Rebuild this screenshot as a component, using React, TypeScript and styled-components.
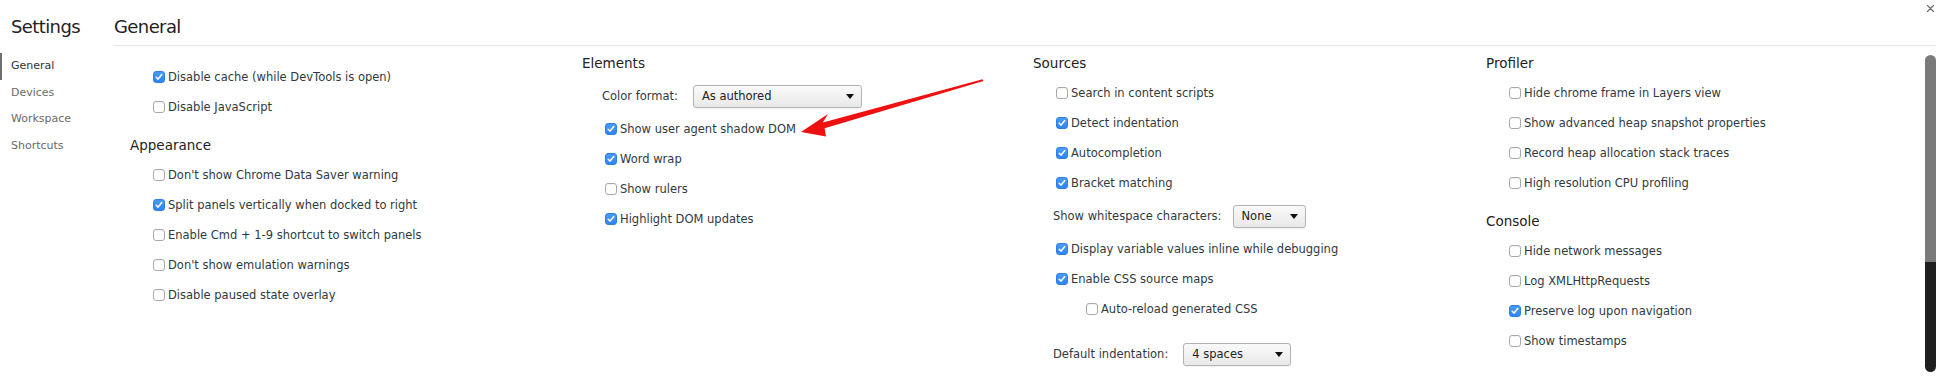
import React from 'react';
import styled, { createGlobalStyle } from 'styled-components';

const Global = createGlobalStyle`
  html, body { margin: 0; padding: 0; background: #ffffff; }
  body { font-family: "DejaVu Sans", "Liberation Sans", sans-serif; color: #303942; }
`;

const Page = styled.div`
  position: relative;
  display: flex;
  width: 1944px;
  height: 381px;
  overflow: hidden;
  background: #ffffff;
`;

const Sidebar = styled.nav`
  flex: none;
  width: 114px;
  display: flex;
  flex-direction: column;
  padding-top: 16px;
  box-sizing: border-box;
`;

const AppTitle = styled.h1`
  margin: 0 0 15px 11px;
  font-size: 18px;
  line-height: 22px;
  font-weight: normal;
  letter-spacing: -0.6px;
  color: #222222;
`;

const Tab = styled.div<{ $active?: boolean }>`
  height: 26.5px;
  line-height: 26.5px;
  font-size: 11px;
  padding-left: ${(p) => (p.$active ? '9px' : '11px')};
  border-left: ${(p) => (p.$active ? '2px solid #6e6e6e' : 'none')};
  color: ${(p) => (p.$active ? '#333333' : '#6a6a6a')};
`;

const Main = styled.main`
  flex: 1;
  display: flex;
  flex-direction: column;
  margin-right: 8px;
  min-width: 0;
`;

const Header = styled.header`
  flex: none;
  height: 46px;
  box-sizing: border-box;
  padding-top: 16px;
  border-bottom: 1px solid #e4e4e4;
`;

const PageTitle = styled.h2`
  margin: 0;
  font-size: 18px;
  line-height: 22px;
  font-weight: normal;
  letter-spacing: -0.6px;
  color: #222222;
`;

const Content = styled.div`
  flex: 1;
  display: flex;
  min-height: 0;
`;

const Columns = styled.div`
  flex: 1;
  display: grid;
  grid-template-columns: 452px 451px 453px 1fr;
  padding-left: 16px;
  align-items: start;
`;

const Column = styled.div<{ $top: number }>`
  display: flex;
  flex-direction: column;
  padding-top: ${(p) => p.$top}px;
`;

const Section = styled.section`
  display: flex;
  flex-direction: column;
  & + & { margin-top: 8px; }
`;

const SectionTitle = styled.h3`
  margin: 0;
  height: 30px;
  line-height: 30px;
  font-size: 13.5px;
  font-weight: normal;
  color: #222222;
`;

const CheckRow = styled.label<{ $nested?: boolean }>`
  display: flex;
  align-items: center;
  height: 30px;
  padding-left: ${(p) => (p.$nested ? 53 : 23)}px;
  gap: 3px;
  font-size: 11.5px;
  white-space: nowrap;
`;

const Box = styled.span<{ $checked: boolean }>`
  flex: none;
  width: 12px;
  height: 12px;
  box-sizing: border-box;
  border-radius: 3px;
  display: flex;
  align-items: center;
  justify-content: center;
  background: ${(p) => (p.$checked ? 'linear-gradient(#4a9bf8, #2f84ef)' : '#ffffff')};
  border: 1px solid ${(p) => (p.$checked ? '#2d7fe6' : '#a9a9a9')};
  box-shadow: ${(p) => (p.$checked ? 'none' : 'inset 0 1px 1px rgba(0,0,0,0.06)')};
`;

const SelectRow = styled.div<{ $spaced?: boolean; $gap: number }>`
  display: flex;
  align-items: center;
  height: 36px;
  padding-left: 20px;
  gap: ${(p) => p.$gap}px;
  font-size: 11.5px;
  margin-top: ${(p) => (p.$spaced ? 12 : 0)}px;
  white-space: nowrap;
`;

const SelectBox = styled.div<{ $width: number }>`
  flex: none;
  width: ${(p) => p.$width}px;
  height: 23px;
  box-sizing: border-box;
  display: flex;
  align-items: center;
  justify-content: space-between;
  padding: 0 7px 0 8px;
  border: 1px solid #b3b3b3;
  border-radius: 3px;
  background: linear-gradient(#f9f9f9, #e9e9e9);
  box-shadow: 0 1px 0 rgba(0,0,0,0.05);
  font-size: 11.5px;
  color: #222222;
`;

const Scrollbar = styled.div`
  flex: none;
  width: 11px;
  height: 317px;
  margin-top: 9px;
  border-radius: 6px;
  background: linear-gradient(#7a7a7a 0, #7a7a7a 207px, #1f1f1f 207px, #1f1f1f 100%);
`;

const CloseButton = styled.button`
  position: absolute;
  top: 4px;
  right: 9px;
  width: 9px;
  height: 9px;
  padding: 0;
  border: none;
  background: transparent;
  display: flex;
  align-items: center;
  justify-content: center;
`;

const ArrowLayer = styled.svg`
  position: absolute;
  left: 0;
  top: 0;
  pointer-events: none;
`;

type Item =
  | { kind: 'check'; label: string; checked?: boolean; nested?: boolean }
  | { kind: 'select'; label: string; value: string; width: number; gap: number; spaced?: boolean };

type Sec = { title?: string; items: Item[] };

const c = (label: string, checked = false, nested = false): Item => ({ kind: 'check', label, checked, nested });

const columns: { top: number; sections: Sec[] }[] = [
  {
    top: 16,
    sections: [
      { items: [c('Disable cache (while DevTools is open)', true), c('Disable JavaScript')] },
      {
        title: 'Appearance',
        items: [
          c("Don't show Chrome Data Saver warning"),
          c('Split panels vertically when docked to right', true),
          c('Enable Cmd + 1-9 shortcut to switch panels'),
          c("Don't show emulation warnings"),
          c('Disable paused state overlay'),
        ],
      },
    ],
  },
  {
    top: 2,
    sections: [
      {
        title: 'Elements',
        items: [
          { kind: 'select', label: 'Color format:', value: 'As authored', width: 169, gap: 15 },
          c('Show user agent shadow DOM', true),
          c('Word wrap', true),
          c('Show rulers'),
          c('Highlight DOM updates', true),
        ],
      },
    ],
  },
  {
    top: 2,
    sections: [
      {
        title: 'Sources',
        items: [
          c('Search in content scripts'),
          c('Detect indentation', true),
          c('Autocompletion', true),
          c('Bracket matching', true),
          { kind: 'select', label: 'Show whitespace characters:', value: 'None', width: 73, gap: 11 },
          c('Display variable values inline while debugging', true),
          c('Enable CSS source maps', true),
          c('Auto-reload generated CSS', false, true),
          { kind: 'select', label: 'Default indentation:', value: '4 spaces', width: 108, gap: 15, spaced: true },
        ],
      },
    ],
  },
  {
    top: 2,
    sections: [
      {
        title: 'Profiler',
        items: [
          c('Hide chrome frame in Layers view'),
          c('Show advanced heap snapshot properties'),
          c('Record heap allocation stack traces'),
          c('High resolution CPU profiling'),
        ],
      },
      {
        title: 'Console',
        items: [
          c('Hide network messages'),
          c('Log XMLHttpRequests'),
          c('Preserve log upon navigation', true),
          c('Show timestamps'),
        ],
      },
    ],
  },
];

const Check = ({ checked }: { checked: boolean }) => (
  <Box $checked={checked}>
    {checked && (
      <svg width="8" height="8" viewBox="0 0 8 8">
        <path d="M1.2 4.3 L3.1 6.1 L6.8 1.6" fill="none" stroke="#ffffff" strokeWidth="1.5" strokeLinecap="round" strokeLinejoin="round" />
      </svg>
    )}
  </Box>
);

const Caret = () => (
  <svg width="8" height="5" viewBox="0 0 8 5">
    <path d="M0 0 H8 L4 5 Z" fill="#111111" />
  </svg>
);

const renderItem = (it: Item, i: number) =>
  it.kind === 'check' ? (
    <CheckRow key={i} $nested={it.nested}>
      <Check checked={!!it.checked} />
      <span>{it.label}</span>
    </CheckRow>
  ) : (
    <SelectRow key={i} $spaced={it.spaced} $gap={it.gap}>
      <span>{it.label}</span>
      <SelectBox $width={it.width}>
        <span>{it.value}</span>
        <Caret />
      </SelectBox>
    </SelectRow>
  );

export default function App() {
  return (
    <>
      <Global />
      <Page>
        <Sidebar>
          <AppTitle>Settings</AppTitle>
          <Tab $active>General</Tab>
          <Tab>Devices</Tab>
          <Tab>Workspace</Tab>
          <Tab>Shortcuts</Tab>
        </Sidebar>
        <Main>
          <Header>
            <PageTitle>General</PageTitle>
          </Header>
          <Content>
            <Columns>
              {columns.map((col, ci) => (
                <Column key={ci} $top={col.top}>
                  {col.sections.map((s, si) => (
                    <Section key={si}>
                      {s.title && <SectionTitle>{s.title}</SectionTitle>}
                      {s.items.map(renderItem)}
                    </Section>
                  ))}
                </Column>
              ))}
            </Columns>
            <Scrollbar />
          </Content>
        </Main>
        <CloseButton aria-label="Close">
          <svg width="7" height="7" viewBox="0 0 7 7">
            <path d="M0.5 0.5 L6.5 6.5 M6.5 0.5 L0.5 6.5" stroke="#6b6b6b" strokeWidth="1.2" strokeLinecap="round" />
          </svg>
        </CloseButton>
        <ArrowLayer width="1944" height="381" viewBox="0 0 1944 381">
          <polygon
            points="801,132 828,114 822.8,122.6 982.6,79.2 983.4,81 824.6,128.2 826,136.5"
            fill="#ee1111"
          />
        </ArrowLayer>
      </Page>
    </>
  );
}
